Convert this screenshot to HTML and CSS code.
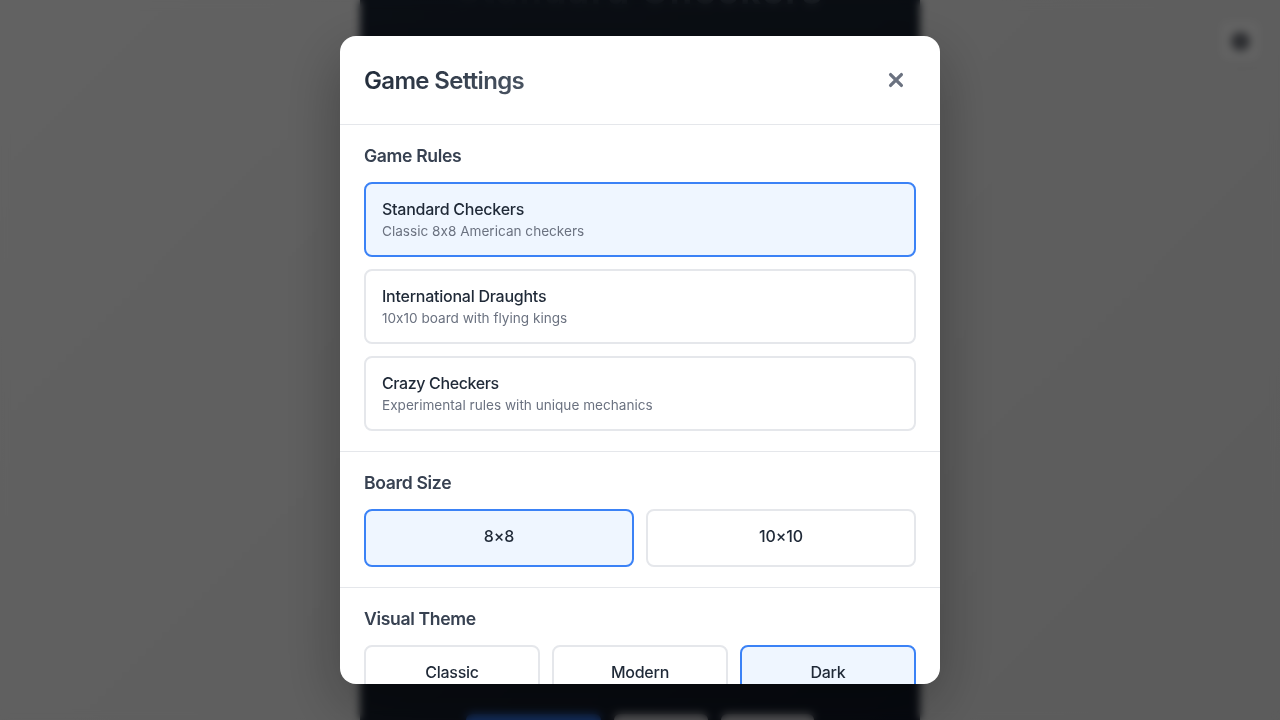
FILE: index.html
```html
<!DOCTYPE html>
<html lang="en">
<head>
<meta charset="utf-8">
<title>Game Settings</title>
<link rel="stylesheet" href="styles.css">
</head>
<body>
<div class="app">
  <main class="board-panel">
    <h1 class="game-title">Standard Checkers</h1>
    <div class="actions"><span class="action primary"></span><span class="action new"></span><span class="action undo"></span></div>
  </main>
  <div class="gear"><span class="gear-dot"></span></div>
</div>
<div class="overlay">
  <div class="modal" role="dialog">
    <header class="modal-header">
      <h2 class="modal-title">Game Settings</h2>
      <button class="close" aria-label="Close"><svg width="18" height="18" viewBox="0 0 18 18"><path d="M3.6 3.6 14.4 14.4M14.4 3.6 3.6 14.4"/></svg></button>
    </header>
    <section class="section">
      <h3 class="section-title">Game Rules</h3>
      <div class="rules">
        <button class="option selected"><span class="name">Standard Checkers</span><span class="desc">Classic 8x8 American checkers</span></button>
        <button class="option"><span class="name">International Draughts</span><span class="desc">10x10 board with flying kings</span></button>
        <button class="option"><span class="name crazy">Crazy Checkers</span><span class="desc">Experimental rules with unique mechanics</span></button>
      </div>
    </section>
    <section class="section">
      <h3 class="section-title">Board Size</h3>
      <div class="choices two">
        <button class="option small selected"><span class="name size">8×8</span></button>
        <button class="option small"><span class="name size">10×10</span></button>
      </div>
    </section>
    <section class="section">
      <h3 class="section-title">Visual Theme</h3>
      <div class="choices three">
        <button class="option small"><span class="name">Classic</span></button>
        <button class="option small"><span class="name">Modern</span></button>
        <button class="option small selected"><span class="name">Dark</span></button>
      </div>
    </section>
  </div>
</div>
</body>
</html>
```
FILE: styles.css
```css
* { box-sizing: border-box; }
body { margin: 0; height: 720px; overflow: hidden; font-family: Inter, "Liberation Sans", sans-serif; -webkit-font-smoothing: antialiased; font-feature-settings: "calt" 0; }
h1, h2, h3 { margin: 0; }
button { font: inherit; font-feature-settings: inherit; margin: 0; }
.app { height: 720px; display: flex; justify-content: center; background: linear-gradient(135deg, #f5f5f5, #e5e5e5); }
.board-panel { width: 560px; height: 720px; display: flex; flex-direction: column; justify-content: space-between; align-items: center; background: linear-gradient(135deg, #1b2433 0%, #19222f 40%, #111827 100%); }
.game-title { margin-top: -28px; font-size: 36px; line-height: 38px; letter-spacing: 1.8px; color: transparent; background: linear-gradient(90deg, #1f2937, #4b5563); background-clip: text; -webkit-background-clip: text; white-space: nowrap; }
.actions { display: flex; gap: 13px; height: 6px; overflow: visible; }
.action { height: 40px; border-radius: 6px; background: #d4d4d8; }
.action.primary { width: 135px; background: #3273e6; }
.action.new { width: 94px; }
.action.undo { width: 93px; }
.gear { position: absolute; top: 21px; right: 20px; width: 40px; height: 40px; border-radius: 8px; display: flex; align-items: center; justify-content: center; background: #f7f7f7; box-shadow: 0 2px 8px rgba(0,0,0,.05); }
.gear-dot { width: 19px; height: 19px; border-radius: 50%; background: #70737a; }
.overlay { position: absolute; inset: 0; display: flex; align-items: center; justify-content: center; background: rgba(0,0,0,.6); backdrop-filter: blur(4px); }
.modal { width: 600px; height: 648px; overflow: hidden; border-radius: 16px; background: #fff; box-shadow: 0 20px 60px rgba(0,0,0,.3); }
.modal-header { height: 89px; padding: 24px; display: flex; align-items: center; justify-content: space-between; border-bottom: 1px solid #e5e7eb; }
.modal-title { padding-top: 2px; font-size: 24px; font-weight: 620; letter-spacing: -.67px; line-height: 30px; color: transparent; background: linear-gradient(135deg, #1f2937, #4b5563); background-clip: text; -webkit-background-clip: text; }
.close { width: 40px; height: 40px; padding: 0 0 1px; border: 0; background: transparent; display: flex; align-items: center; justify-content: center; }
.close path { fill: none; stroke: #6b7280; stroke-width: 3.3; stroke-linecap: round; }
.section { padding: 20px 24px; border-bottom: 1px solid #e5e7eb; }
.section-title { height: 21px; margin-bottom: 16px; font-size: 17.6px; line-height: 21px; font-weight: 600; letter-spacing: -.35px; color: #374151; }
.rules { display: grid; gap: 12px; }
.choices { display: grid; gap: 12px; }
.two { grid-template-columns: 1fr 1fr; }
.three { grid-template-columns: 1fr 1fr 1fr; }
.option { height: 75px; padding: 16px; border: 2px solid #e5e7eb; border-radius: 8px; background: #fff; text-align: left; display: flex; flex-direction: column; align-items: flex-start; }
.option.small { height: 58px; align-items: center; }
.option.selected { border-color: #3b82f6; background: #eff6ff; }
.name { font-size: 16px; line-height: 19px; font-weight: 500; letter-spacing: -.25px; color: #1f2937; margin-bottom: 4px; }
.name.crazy { letter-spacing: -.38px; }
.name.size { letter-spacing: -.1px; }
.desc { font-size: 13.6px; line-height: 17px; letter-spacing: 0; color: #6b7280; }
```
